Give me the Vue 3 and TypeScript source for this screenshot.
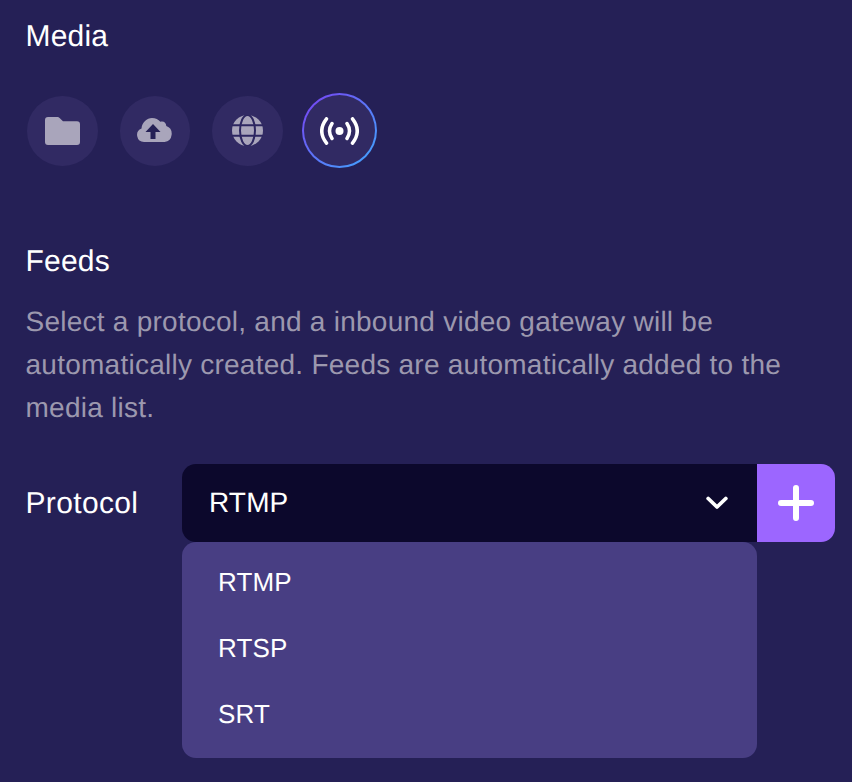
<script setup lang="ts">
const options: string[] = ['RTMP', 'RTSP', 'SRT']
</script>

<template>
  <div class="page">
    <h2 class="title">Media</h2>
    <div class="sources">
      <div class="source">
        <svg width="35" height="28" viewBox="0 0 35 28"><path d="M3 0h9.500a3 3 0 0 1 2.100.9L18 4.200h14a3 3 0 0 1 3 3V25a3 3 0 0 1-3 3H3a3 3 0 0 1-3-3V3a3 3 0 0 1 3-3z" fill="#a9a5bb"/></svg>
      </div>
      <div class="source">
        <svg class="cloud" width="35" height="24" viewBox="0 0 35 24"><path d="M7 24a7 7 0 0 1-2.500-13.500C5 4.500 10 0 15 0c3.500 0 6.500 1.500 8.300 3.800 3-1.200 6 .8 6 4.200A8.300 8.300 0 0 1 27.500 24z" fill="#a9a5bb"/><path d="M16 6l7.500 8h-5v7h-5v-7h-5z" fill="#252056"/></svg>
      </div>
      <div class="source">
        <svg width="31" height="31" viewBox="0 0 31 31"><circle cx="15.500" cy="15.500" r="15.500" fill="#a9a5bb"/><g fill="none" stroke="#2c2660" stroke-width="2"><ellipse cx="15.500" cy="15.500" rx="7.500" ry="15.500"/><path d="M0 10.200h31M0 20.800h31"/></g></svg>
      </div>
      <div class="source active">
        <svg width="39" height="28" viewBox="0 0 39 28" fill="none" stroke="#fff" stroke-width="3.500" stroke-linecap="round"><circle cx="19.500" cy="14" r="4" fill="#fff" stroke="none"/><path d="M12 6.500Q7 14 12 21.500M27 6.500Q32 14 27 21.500M6.500 1.800Q-3 14 6.500 26.200M32.500 1.800Q42 14 32.500 26.200"/></svg>
      </div>
    </div>

    <h2 class="subtitle">Feeds</h2>
    <p class="desc">Select a protocol, and a inbound video gateway will be automatically created. Feeds are automatically added to the media list.</p>

    <div class="row">
      <label class="label">Protocol</label>
      <div class="control">
        <div class="select">
          <span>RTMP</span>
          <svg width="22" height="14" viewBox="0 0 22 14" fill="none" stroke="#fff" stroke-width="3.800" stroke-linecap="round" stroke-linejoin="round"><path d="M2.200 2.500l8.800 8.500 8.800-8.500"/></svg>
        </div>
        <button class="add" type="button">
          <svg width="36" height="36" viewBox="0 0 36 36" stroke="#fff" stroke-width="6" stroke-linecap="round"><path d="M18 3v30M3 18h30"/></svg>
        </button>
        <ul class="menu">
          <li v-for="o in options" :key="o" class="item">{{ o }}</li>
        </ul>
      </div>
    </div>
  </div>
</template>

<style>
html, body { margin: 0; background: #252056; }
</style>

<style scoped>
.page {
  width: 852px;
  height: 782px;
  box-sizing: border-box;
  padding: 18px 17px 0 25.500px;
  background: #252056;
  color: #fff;
  font-family: "Liberation Sans", Arial, sans-serif;
  text-rendering: geometricPrecision;
  letter-spacing: 0.01em;
  overflow: hidden;
}
.title, .subtitle { margin: 0; font-weight: 400; font-size: 30px; line-height: 37px; letter-spacing: 0.2px; }
.sources { display: flex; align-items: center; gap: 22px; margin-top: 38px; padding-left: 1.500px; }
.source { width: 70.500px; height: 70px; border-radius: 50%; background: #312a63; display: flex; align-items: center; justify-content: center; flex: none; }
.source.active { width: 75px; height: 75px; box-sizing: border-box; margin-left: -2.500px; border: 2px solid transparent; background: linear-gradient(#312a63, #312a63) padding-box, linear-gradient(135deg, #7a3ff2, #3fa9ff) border-box; }
.cloud { margin-bottom: 2px; }
.subtitle { margin-top: 75px; }
.desc { margin: 20px 0 0; font-size: 28px; line-height: 43px; letter-spacing: 0.25px; color: #9c98ae; }
.row { display: flex; align-items: center; margin-top: 35px; }
.label { width: 156.500px; padding-top: 2px; font-size: 30px; letter-spacing: 0.35px; flex: none; }
.control { position: relative; display: flex; width: 653px; height: 78px; }
.select { flex: 1; display: flex; align-items: center; justify-content: space-between; padding: 0 29px 0 27px; background: #0c082c; border-radius: 14px 0 0 14px; font-size: 28px; }
.add { width: 78px; height: 78px; border: 0; padding: 0; background: #9c66ff; border-radius: 0 14px 14px 0; display: flex; align-items: center; justify-content: center; }
.menu { position: absolute; left: 0; top: 78px; width: 575px; height: 216px; box-sizing: border-box; margin: 0; padding: 7px 0; list-style: none; background: #483e83; border-radius: 14px; font-size: 26px; }
.item { height: 66px; line-height: 66px; padding-left: 36px; }
</style>
